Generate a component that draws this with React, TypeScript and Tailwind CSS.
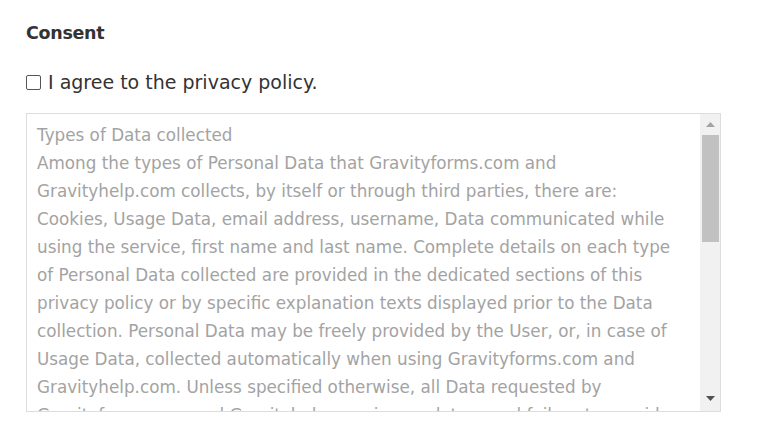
import React from "react";

const lines = [
  "Types of Data collected",
  "Among the types of Personal Data that Gravityforms.com and",
  "Gravityhelp.com collects, by itself or through third parties, there are:",
  "Cookies, Usage Data, email address, username, Data communicated while",
  "using the service, first name and last name. Complete details on each type",
  "of Personal Data collected are provided in the dedicated sections of this",
  "privacy policy or by specific explanation texts displayed prior to the Data",
  "collection. Personal Data may be freely provided by the User, or, in case of",
  "Usage Data, collected automatically when using Gravityforms.com and",
  "Gravityhelp.com. Unless specified otherwise, all Data requested by",
  "Gravityforms.com and Gravityhelp.com is mandatory and failure to provide",
];

export default function App() {
  return (
    <div
      className="w-[766px] h-[438px] bg-white pl-[26px] pt-[21px] overflow-hidden"
      style={{ fontFamily: '"DejaVu Sans", "Liberation Sans", sans-serif' }}
    >
      <h2 className="text-[17.5px] leading-[24px] font-bold text-[#333333] tracking-[-0.3px]">Consent</h2>
      <label className="mt-[25px] flex items-center h-[24px]">
        <span className="w-[15px] h-[15px] border border-[#555555] rounded-[2px] bg-white shrink-0" />
        <span className="ml-[7px] text-[19px] leading-[24px] text-[#333333]">I agree to the privacy policy.</span>
      </label>
      <div className="mt-[19px] w-[695px] h-[299px] border border-[#dddddd] flex bg-white">
        <div className="flex-1 overflow-hidden pl-[10px] pt-[7px]">
          {lines.map((l, i) => (
            <div key={i} className="whitespace-nowrap text-[16.8px] leading-[28px] text-[#a3a3a3]">
              {l}
            </div>
          ))}
        </div>
        <div className="w-[20px] bg-[#f1f1f1] flex flex-col items-center">
          <div className="h-[21px] w-full flex items-center justify-center">
            <svg width="9" height="5" viewBox="0 0 9 5">
              <polygon points="4.5,0 9,5 0,5" fill="#a3a3a3" />
            </svg>
          </div>
          <div className="w-[17px] h-[107px] bg-[#c1c1c1]" />
          <div className="flex-1" />
          <div className="h-[21px] w-full flex items-center justify-center mb-[2px]">
            <svg width="9" height="5" viewBox="0 0 9 5">
              <polygon points="0,0 9,0 4.5,5" fill="#505050" />
            </svg>
          </div>
        </div>
      </div>
    </div>
  );
}
